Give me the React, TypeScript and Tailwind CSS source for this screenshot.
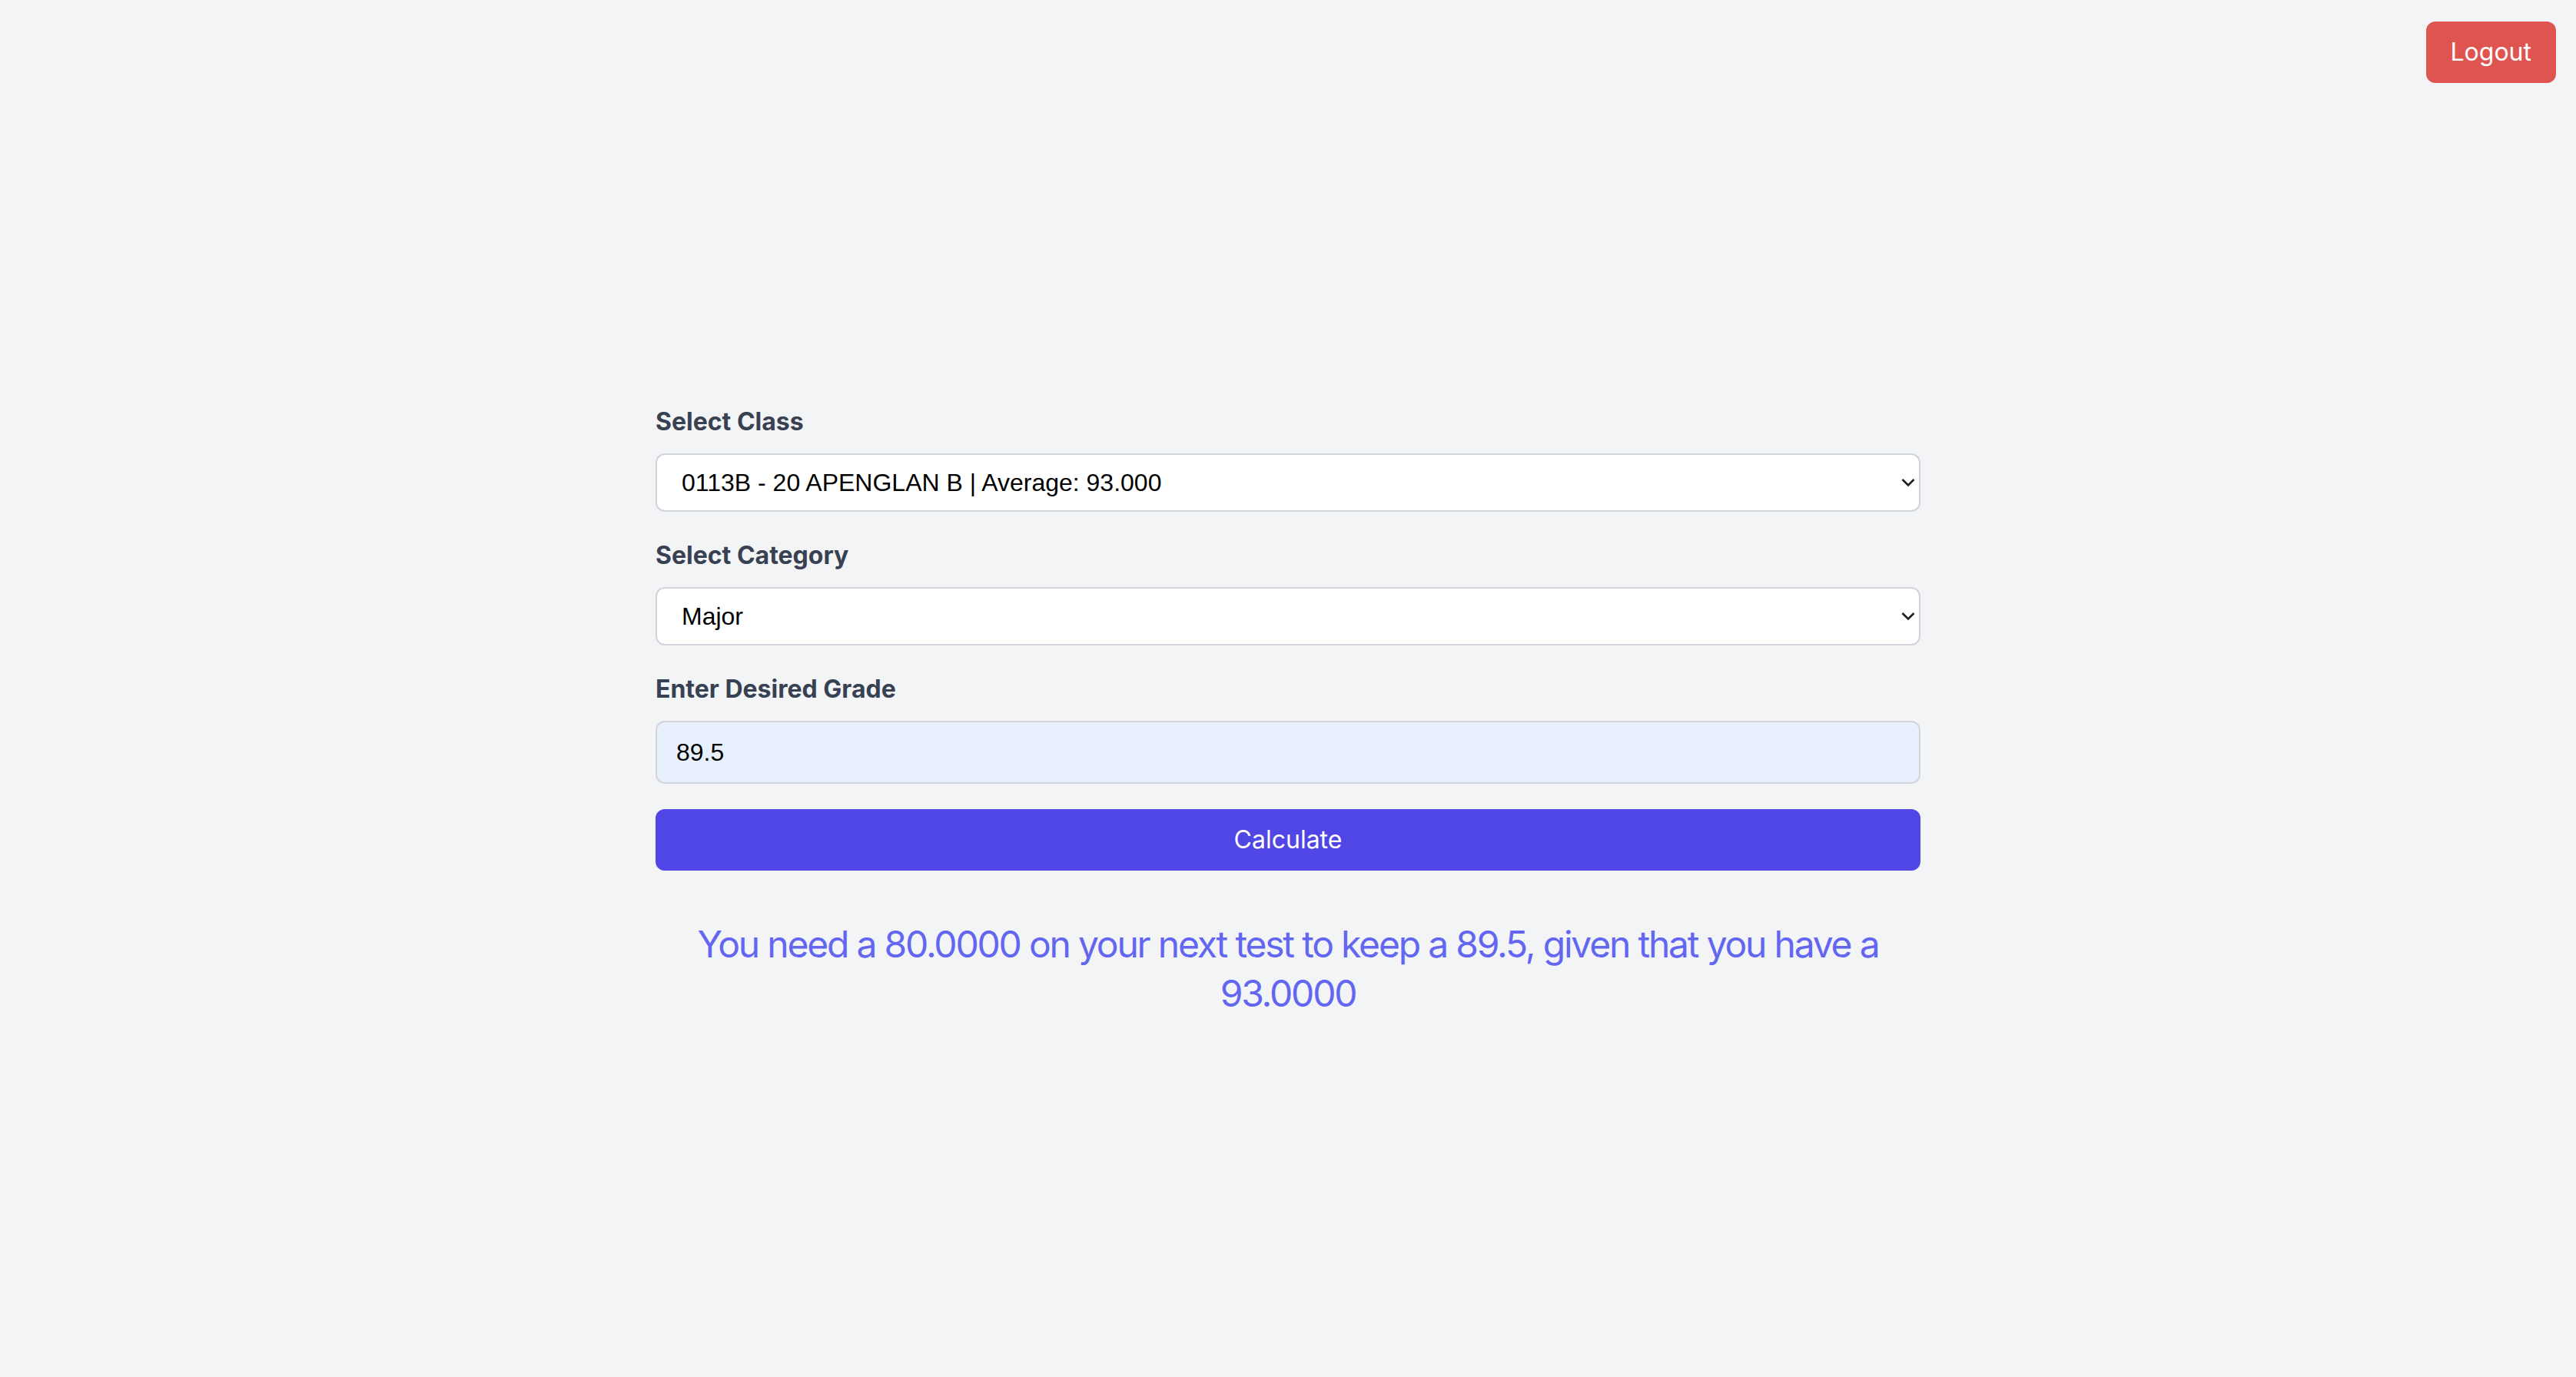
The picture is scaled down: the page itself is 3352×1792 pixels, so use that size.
import React, { useState } from 'react';

const Chevron: React.FC = () => (
    <svg
        className="pointer-events-none absolute right-[7px] top-1/2 -translate-y-1/2"
        width="18"
        height="12"
        viewBox="0 0 18 12"
        fill="none"
    >
        <path d="M1.5 2 L9 9.5 L16.5 2" stroke="#1f1f1f" strokeWidth="2.6" />
    </svg>
);

const App: React.FC = () => {
    const [cls, setCls] = useState('0113B');
    const [category, setCategory] = useState('Major');
    const [grade, setGrade] = useState('89.5');

    return (
        <div className="min-h-screen bg-[#f3f4f6] font-['Inter','Noto_Sans',sans-serif]">
            <div className="flex justify-end pt-[28px] pr-[26px]">
                <button className="h-[80px] px-[32px] rounded-[12px] bg-[#df5450] text-white text-[32px] leading-[48px]">
                    Logout
                </button>
            </div>

            <main className="mx-auto w-[1646px] pt-[417px]">
                <label className="block text-[32px] leading-[48px] font-bold text-[#374151] mb-[17px]">
                    Select Class
                </label>
                <div className="relative mb-[33px]">
                    <select
                        value={cls}
                        onChange={e => setCls(e.target.value)}
                        className="w-full h-[76px] appearance-none rounded-[12px] border-2 border-[#d1d5db] bg-white pl-[32px] pr-[40px] text-[32px] text-black font-['Liberation_Sans',Arial,sans-serif] outline-none"
                    >
                        <option value="0113B">0113B - 20 APENGLAN B | Average: 93.000</option>
                    </select>
                    <Chevron />
                </div>

                <label className="block text-[32px] leading-[48px] font-bold text-[#374151] mb-[17px]">
                    Select Category
                </label>
                <div className="relative mb-[33px]">
                    <select
                        value={category}
                        onChange={e => setCategory(e.target.value)}
                        className="w-full h-[76px] appearance-none rounded-[12px] border-2 border-[#d1d5db] bg-white pl-[32px] pr-[40px] text-[32px] text-black font-['Liberation_Sans',Arial,sans-serif] outline-none"
                    >
                        <option value="Major">Major</option>
                        <option value="Minor">Minor</option>
                    </select>
                    <Chevron />
                </div>

                <label className="block text-[32px] leading-[48px] font-bold text-[#374151] mb-[17px]">
                    Enter Desired Grade
                </label>
                <input
                    value={grade}
                    onChange={e => setGrade(e.target.value)}
                    className="block w-full h-[82px] rounded-[12px] border-2 border-[#d1d5db] bg-[#e8f0fe] pl-[25px] text-[32px] text-black font-['Liberation_Sans',Arial,sans-serif] outline-none"
                />

                <button className="mt-[33px] w-full h-[80px] rounded-[12px] bg-[#4f46e5] text-white text-[32px] leading-[48px]">
                    Calculate
                </button>

                <p className="mt-[64px] text-center text-[48px] leading-[64px] tracking-[-2.2px] text-[#6366f1]">
                    You need a 80.0000 on your next test to keep a 89.5, given that you have a 93.0000
                </p>
            </main>
        </div>
    );
};

export default App;
